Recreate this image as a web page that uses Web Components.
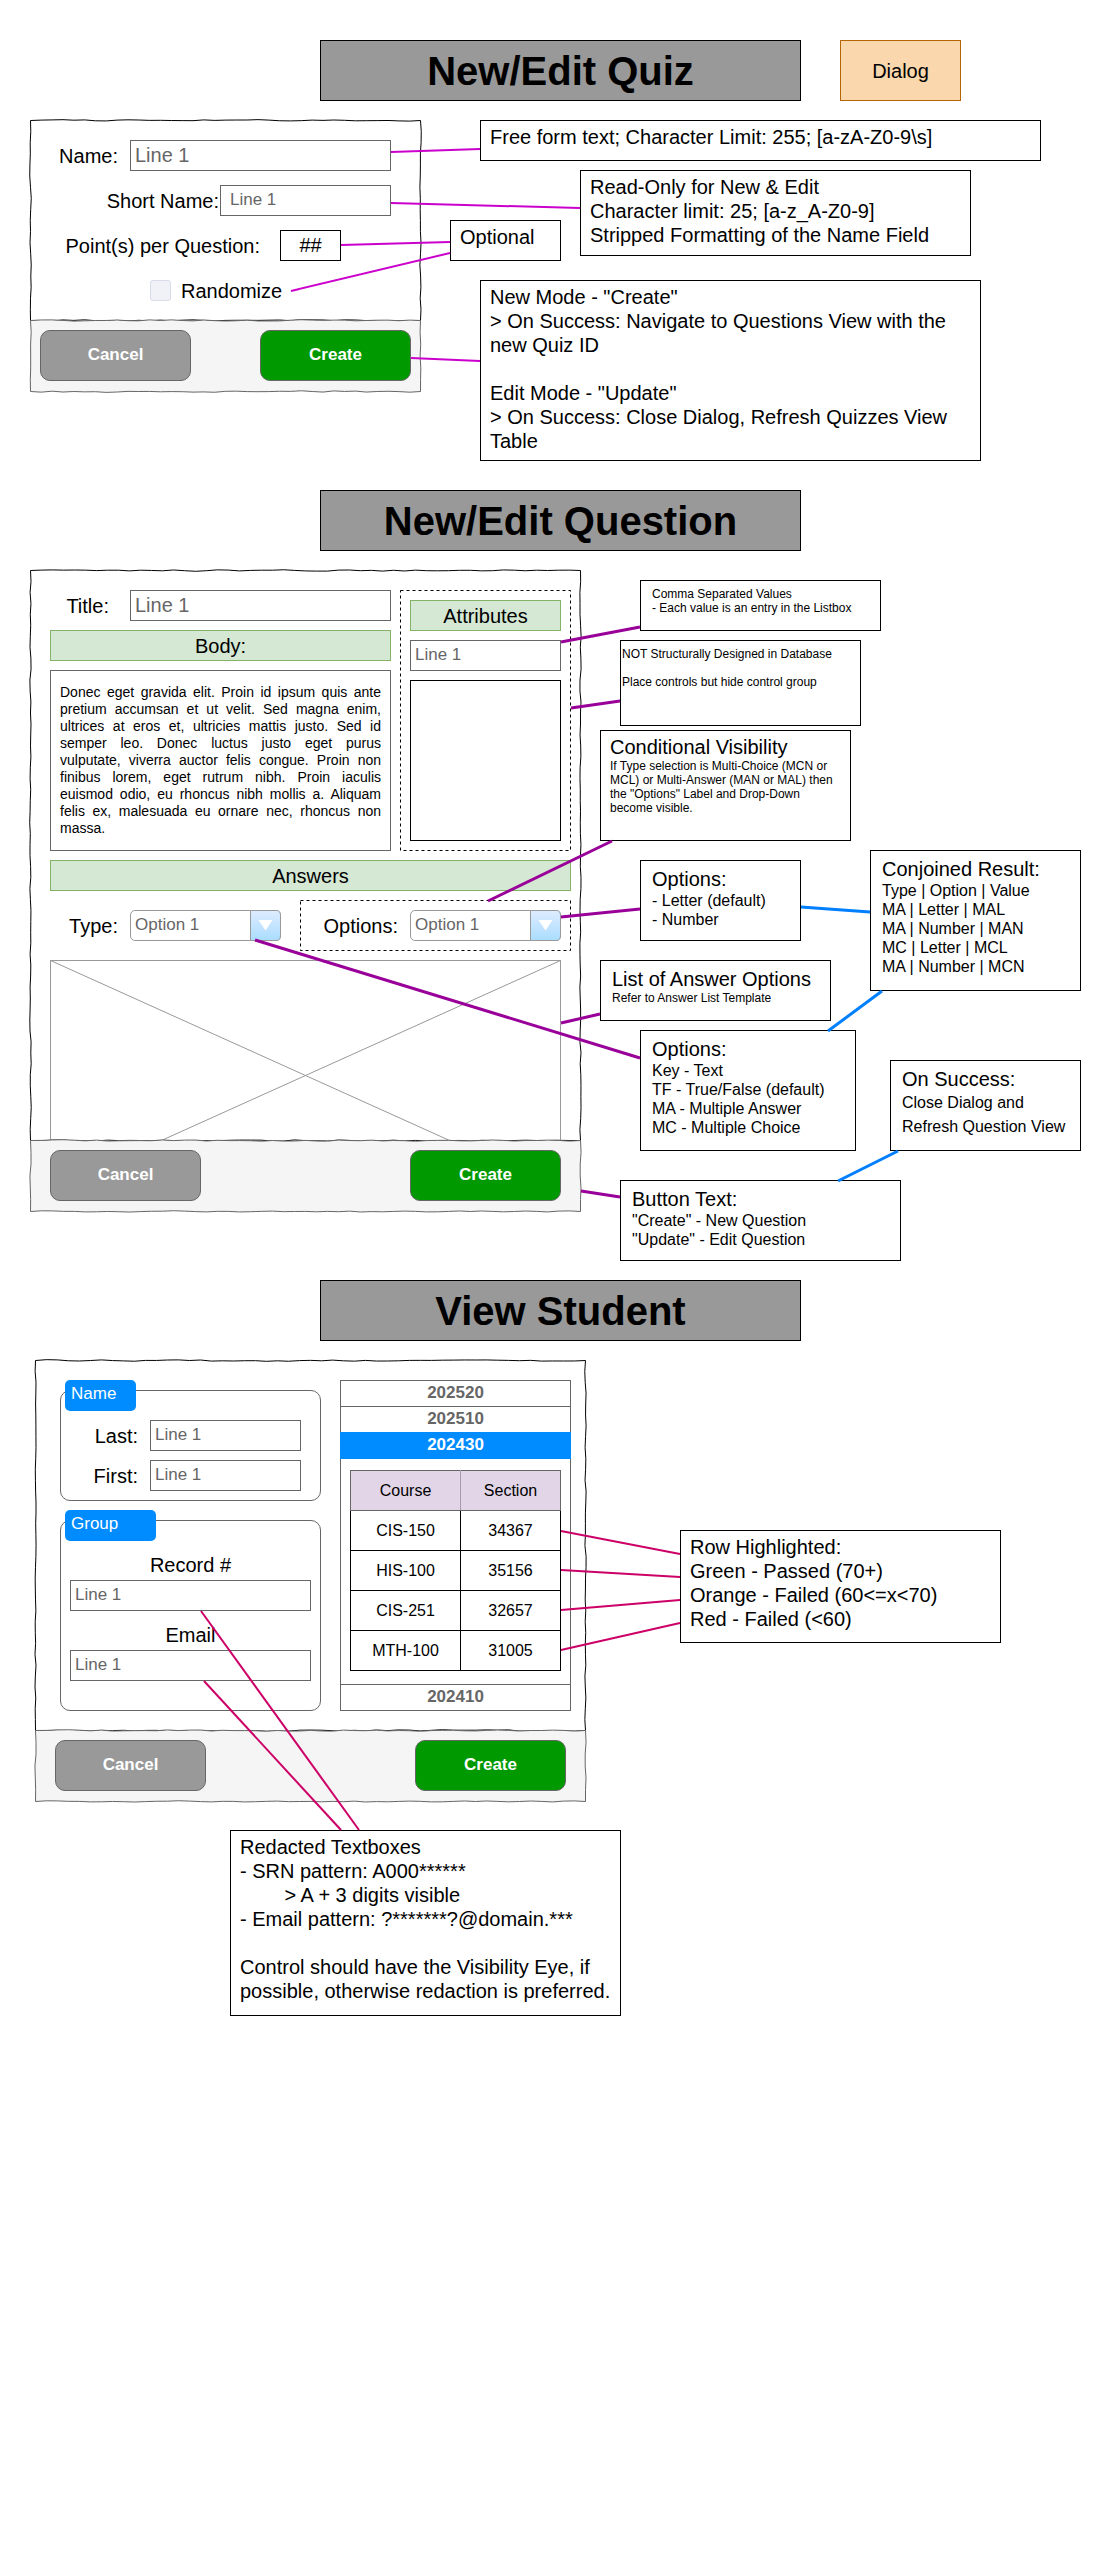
<!DOCTYPE html>
<html lang="en">
<head>
<meta charset="utf-8">
<title>Quiz dialogs wireframe</title>
<style>
  body { margin: 0; background: #fff; color: #000; font: 20px/24px "Liberation Sans", Arial, sans-serif; }
</style>
</head>
<body>
<wf-board>
  <wf-section style="--after: 99px">
    <wf-banner slot="head">New/Edit Quiz</wf-banner>
    <wf-badge slot="head">Dialog</wf-badge>
    <wf-quiz-dialog></wf-quiz-dialog>
  </wf-section>
  <wf-section style="--after: 69px">
    <wf-banner slot="head">New/Edit Question</wf-banner>
    <wf-question-dialog></wf-question-dialog>
  </wf-section>
  <wf-section style="--indent: 35px">
    <wf-banner slot="head">View Student</wf-banner>
    <wf-student-dialog></wf-student-dialog>
  </wf-section>

  <wf-note slot="notes" x="480" y="120" w="561" h="41"><p>Free form text; Character Limit: 255; [a-zA-Z0-9\s]</p></wf-note>
  <wf-note slot="notes" x="580" y="170" w="391" h="86"><p>Read-Only for New &amp; Edit</p><p>Character limit: 25; [a-z_A-Z0-9]</p><p>Stripped Formatting of the Name Field</p></wf-note>
  <wf-note slot="notes" x="450" y="220" w="111" h="41"><p>Optional</p></wf-note>
  <wf-note slot="notes" x="480" y="280" w="501" h="181"><p>New Mode - "Create"</p><p>&gt; On Success: Navigate to Questions View with the new Quiz ID</p><p><br></p><p>Edit Mode - "Update"</p><p>&gt; On Success: Close Dialog, Refresh Quizzes View Table</p></wf-note>

  <wf-note slot="notes" kind="inset" x="640" y="580" w="241" h="51"><p class="small">Comma Separated Values</p><p class="small">- Each value is an entry in the Listbox</p></wf-note>
  <wf-note slot="notes" kind="tight" x="620" y="640" w="241" h="86"><p class="small">NOT Structurally Designed in Database</p><p class="small"><br></p><p class="small">Place controls but hide control group</p></wf-note>
  <wf-note slot="notes" kind="narrow" x="600" y="730" w="251" h="111"><p>Conditional Visibility</p><p class="small">If Type selection is Multi-Choice (MCN or MCL) or Multi-Answer (MAN or MAL) then the "Options" Label and Drop-Down become visible.</p></wf-note>
  <wf-note slot="notes" kind="list" x="870" y="850" w="211" h="141"><p>Conjoined Result:</p><p class="mid">Type | Option | Value</p><p class="mid">MA | Letter | MAL</p><p class="mid">MA | Number | MAN</p><p class="mid">MC | Letter | MCL</p><p class="mid">MA | Number | MCN</p></wf-note>
  <wf-note slot="notes" kind="list" x="640" y="860" w="161" h="81"><p>Options:</p><p class="mid">- Letter (default)</p><p class="mid">- Number</p></wf-note>
  <wf-note slot="notes" kind="list" x="600" y="960" w="231" h="61"><p>List of Answer Options</p><p class="small">Refer to Answer List Template</p></wf-note>
  <wf-note slot="notes" kind="list" x="640" y="1030" w="216" h="121"><p>Options:</p><p class="mid">Key - Text</p><p class="mid">TF - True/False (default)</p><p class="mid">MA - Multiple Answer</p><p class="mid">MC - Multiple Choice</p></wf-note>
  <wf-note slot="notes" kind="list" x="890" y="1060" w="191" h="91"><p>On Success:</p><p class="mid loose">Close Dialog and</p><p class="mid loose">Refresh Question View</p></wf-note>
  <wf-note slot="notes" kind="list" x="620" y="1180" w="281" h="81"><p>Button Text:</p><p class="mid">"Create" - New Question</p><p class="mid">"Update" - Edit Question</p></wf-note>

  <wf-note slot="notes" x="680" y="1530" w="321" h="113"><p>Row Highlighted:</p><p>Green - Passed (70+)</p><p>Orange - Failed (60&lt;=x&lt;70)</p><p>Red - Failed (&lt;60)</p></wf-note>
  <wf-note slot="notes" x="230" y="1830" w="391" h="186"><p>Redacted Textboxes</p><p>- SRN pattern: A000******</p><p class="pre">        &gt; A + 3 digits visible</p><p>- Email pattern: ?*******?@domain.***</p><p><br></p><p>Control should have the Visibility Eye, if possible, otherwise redaction is preferred.</p></wf-note>
</wf-board>

<script>
const define = (name, html, setup) => {
  const template = document.createElement('template');
  template.innerHTML = html;
  customElements.define(name, class extends HTMLElement {
    connectedCallback() {
      if (this.shadowRoot) return;
      this.attachShadow({ mode: 'open' }).append(template.content.cloneNode(true));
      if (setup) setup(this, this.shadowRoot);
    }
  });
};

/* Connector lines: x1, y1, x2, y2 for each colour and weight. */
const connectors = [
  ['#cc00cc', 2, [[391,152,480,149],[391,203,580,208],[341,245,450,242],[291,291,450,253],[411,358,480,361]]],
  ['#990099', 3, [[561,642,640,627],[571,708,620,701],[488,901,612,841],[561,917,640,909],[561,1023,600,1014],[255,940,640,1058],[581,1191,620,1197]]],
  ['#007fff', 3, [[801,907,870,912],[882,991,828,1031],[898,1151,838,1181]]],
  ['#cc0066', 2, [[561,1531,680,1554],[561,1570,680,1577],[561,1610,680,1600],[561,1650,680,1623],[201,1611,359,1830],[204,1681,341,1830]]]
];

define('wf-board', `
  <style>
    :host { display: block; position: relative; min-height: 100vh; box-sizing: border-box; padding-top: 40px; }
    svg { position: absolute; left: 0; top: 0; width: 1px; height: 1px; overflow: visible; pointer-events: none; }
  </style>
  <slot></slot><slot name="notes"></slot><svg aria-hidden="true"></svg>`,
  (host, root) => {
    root.querySelector('svg').innerHTML = connectors.map(([color, width, lines]) =>
      `<g stroke="${color}" stroke-width="${width}">` +
      lines.map(([a, b, c, d]) => `<line x1="${a}" y1="${b}" x2="${c}" y2="${d}"/>`).join('') + '</g>').join('');
  });

define('wf-section', `
  <style>
    :host { display: flex; flex-direction: column; gap: 19px; padding-bottom: var(--after, 0px); }
    header { display: flex; gap: 39px; padding-left: 320px; }
    .body { display: flex; padding-left: var(--indent, 30px); }
  </style>
  <header><slot name="head"></slot></header>
  <div class="body"><slot></slot></div>`);

define('wf-banner', `
  <style>
    :host { display: block; width: 481px; box-sizing: border-box; padding-top: 2px; background: #999; border: 1px solid #000; }
    h2 { margin: 0; font-size: 40px; line-height: 57px; text-align: center; }
  </style>
  <h2><slot></slot></h2>`);

define('wf-badge', `
  <style>
    :host { display: flex; align-items: center; justify-content: center; width: 121px; box-sizing: border-box;
      background: #fad7ac; border: 1px solid #b46504; }
  </style>
  <slot></slot>`);

define('wf-note', `
  <style>
    :host { display: block; position: absolute; box-sizing: border-box; background: #fff; border: 1px solid #000; padding: 4px 4px 4px 9px; }
    :host([kind="narrow"]) { padding-right: 14px; }
    :host([kind="inset"]) { padding: 6px 8px 4px 11px; }
    :host([kind="tight"]) { padding: 6px 2px 4px 1px; }
    :host([kind="list"]) { padding: 6px 4px 4px 11px; }
    ::slotted(p) { margin: 0; }
    ::slotted(.mid) { font-size: 16px; line-height: 19px; }
    ::slotted(.small) { font-size: 12px; line-height: 14px; }
    ::slotted(.loose) { line-height: 24px; }
    ::slotted(.pre) { white-space: pre; }
  </style>
  <slot></slot>`,
  host => {
    const at = name => host.getAttribute(name) + 'px';
    Object.assign(host.style, { left: at('x'), top: at('y'), width: at('w'), minHeight: at('h') });
  });

/* Panel with a hand-drawn outline. */
const roughEdge = (w, h, seed) => {
  let s = seed;
  const rnd = () => (s = (s * 16807) % 2147483647) / 2147483647 * 2 - 1;
  const walk = (x1, y1, x2, y2) => {
    const len = Math.hypot(x2 - x1, y2 - y1), n = Math.round(len / 22);
    const ux = (x2 - x1) / len, uy = (y2 - y1) / len;
    let d = '';
    for (let i = 1; i <= n; i++) {
      const t = i / n, m = t - .5 / n, j = i === n ? 0 : rnd() * .6, k = rnd() * 1.4;
      d += `Q${(x1 + ux * len * m - uy * k).toFixed(1)} ${(y1 + uy * len * m + ux * k).toFixed(1)} ` +
           `${(x1 + ux * len * t - uy * j).toFixed(1)} ${(y1 + uy * len * t + ux * j).toFixed(1)}`;
    }
    return d;
  };
  return `M.5 .5${walk(.5, .5, w - .5, .5)}${walk(w - .5, .5, w - .5, h + .5)}${walk(w - .5, h + .5, .5, h + .5)}${walk(.5, h + .5, .5, .5)}Z`;
};

define('wf-panel', `
  <style>
    :host { display: block; position: relative; }
    svg { position: absolute; inset: 0; width: 100%; height: 100%; overflow: visible; }
    path { vector-effect: non-scaling-stroke; }
    div { position: relative; height: 100%; box-sizing: border-box; }
  </style>
  <svg preserveAspectRatio="none" aria-hidden="true"></svg><div><slot></slot></div>`,
  (host, root) => {
    const w = +host.getAttribute('w'), h = +host.getAttribute('h'), footer = host.hasAttribute('footer');
    const svg = root.querySelector('svg');
    svg.setAttribute('viewBox', `0 0 ${w} ${h}`);
    svg.innerHTML = `<path d="${roughEdge(w, h, w * 7 + h)}" fill="${footer ? '#f5f5f5' : '#fff'}" stroke="${footer ? '#666' : '#000'}"/>`;
  });

define('wf-dialog-footer', `
  <style>
    :host { display: block; }
    footer { display: flex; justify-content: space-between; padding: 10px var(--side, 20px); }
    button { width: 151px; height: 51px; box-sizing: border-box; padding: 0 0 2px; border: 1px solid #666; border-radius: 10px;
      background: #999; color: #fff; font: bold 17px/20px "Liberation Sans", Arial, sans-serif; }
    .create { background: #009900; }
  </style>
  <footer><button type="button">Cancel</button><button type="button" class="create">Create</button></footer>`);

define('wf-field', `
  <style>
    :host { display: flex; align-items: center; justify-content: flex-end; gap: var(--gap, 12px); }
    :host([stacked]) { flex-direction: column; align-items: stretch; gap: 0; }
    label { white-space: nowrap; }
    label:empty { display: none; }
    :host([stacked]) label { text-align: center; line-height: 30px; }
    input { width: var(--input, 151px); height: 31px; box-sizing: border-box; margin: 0; padding: 0 4px 2px; border: 1px solid #666;
      border-radius: 0; background: #fff; color: #666; font: 17px/20px "Liberation Sans", Arial, sans-serif; }
    :host([large]) input { font-size: 20px; line-height: 24px; padding-bottom: 0; }
    :host([indent]) input { padding: 0 9px 1px; }
    :host([count]) input { border-color: #000; color: #000; font-size: 20px; padding: 0; text-align: center; }
    :host([stacked]) input, :host(:not([label])) input { width: 100%; }
  </style>
  <label for="box"></label><input id="box" type="text">`,
  (host, root) => {
    root.querySelector('label').textContent = host.getAttribute('label') || '';
    const input = root.querySelector('input');
    input.setAttribute('value', host.getAttribute('value') || 'Line 1');
    if (!host.hasAttribute('label')) input.setAttribute('aria-label', 'Attribute values');
  });

define('wf-check', `
  <style>
    :host { display: flex; align-items: center; gap: 10px; }
    input { appearance: none; width: 21px; height: 21px; margin: 0; box-sizing: border-box; border: 1px solid #d8dce8; border-radius: 3px; background: #f0f2f7; }
  </style>
  <input id="tick" type="checkbox"><label for="tick"><slot></slot></label>`);

define('wf-select', `
  <style>
    :host { display: flex; align-items: center; justify-content: flex-end; gap: 12px; }
    .box { display: grid; width: 151px; height: 31px; }
    .box > * { grid-area: 1 / 1; }
    select { appearance: none; width: 100%; height: 31px; box-sizing: border-box; margin: 0; padding: 0 34px 2px 4px; border: 1px solid #999;
      border-radius: 5px; background: #fff; color: #666; font: 17px/20px "Liberation Sans", Arial, sans-serif; }
    svg { justify-self: end; pointer-events: none; }
  </style>
  <label for="pick"></label>
  <span class="box">
    <select id="pick"><option>Option 1</option></select>
    <svg width="31" height="31" viewBox="0 0 31 31" aria-hidden="true">
      <defs><linearGradient id="g" x1="0" y1="0" x2="0" y2="1"><stop offset="0" stop-color="#deecff"/><stop offset="1" stop-color="#aaddff"/></linearGradient></defs>
      <path d="M.5 .5H26.500Q30.500 .5 30.500 5.500V25.500Q30.500 30.500 26.500 30.500H.5Z" fill="url(#g)" stroke="#999"/>
      <path d="M8.500 10H22.500L15.500 20.500Z" fill="#fff"/>
    </svg>
  </span>`,
  (host, root) => { root.querySelector('label').textContent = host.getAttribute('label'); });

define('wf-band', `
  <style>
    :host { display: block; box-sizing: border-box; background: #d5e8d4; border: 1px solid #82b366; padding-top: 1px; line-height: 28px; text-align: center; }
  </style>
  <slot></slot>`);

/* Dashed control group. */
define('wf-dashed', `
  <style>
    :host { display: block; position: relative; box-sizing: border-box; padding: 10px; }
    svg { position: absolute; inset: 0; width: 100%; height: 100%; }
    .in { display: flex; flex-direction: column; gap: 9px; position: relative; }
  </style>
  <svg aria-hidden="true"><rect x=".5" y=".5" fill="none" stroke="#000" stroke-dasharray="3 3" style="width: calc(100% - 1px); height: calc(100% - 1px)"/></svg>
  <div class="in"><slot></slot></div>`);

define('wf-quiz-dialog', `
  <style>
    :host { display: block; width: 391px; }
    form { display: flex; flex-direction: column; gap: 14px; padding: 20px 30px 14px; }
    .points { --gap: 20px; --input: 61px; padding-right: 50px; }
    .tick { height: 31px; padding-left: 90px; }
  </style>
  <wf-panel w="391" h="200"><form>
    <wf-field large label="Name:" value="Line 1" style="--input: 261px"></wf-field>
    <wf-field indent label="Short Name:" value="Line 1" style="--gap: 1px; --input: 171px"></wf-field>
    <wf-field count class="points" label="Point(s) per Question:" value="##"></wf-field>
    <wf-check class="tick">Randomize</wf-check>
  </form></wf-panel>
  <wf-panel footer w="391" h="70"><wf-dialog-footer style="--side: 10px"></wf-dialog-footer></wf-panel>`);

define('wf-question-dialog', `
  <style>
    :host { display: block; width: 551px; }
    form { display: flex; flex-direction: column; gap: 9px; padding: 20px 10px 0 20px; }
    .top, .opts { display: flex; gap: 9px; }
    .left { display: flex; flex-direction: column; gap: 9px; width: 341px; }
    textarea { display: block; height: 181px; box-sizing: border-box; margin: 0; padding: 13px 9px 8px; border: 1px solid #666; border-radius: 0;
      resize: none; overflow: hidden; background: #fff; color: #000; font: 14px/17px "Liberation Sans", Arial, sans-serif; text-align: justify; }
    .attrs { flex: 1; }
    .attrs select { height: 161px; box-sizing: border-box; margin: 0; padding: 0; border: 1px solid #000; border-radius: 0; background: #fff; }
    .opts { justify-content: space-between; }
    .type { width: 231px; height: 51px; }
    .group { width: 271px; }
    .image { display: block; width: 511px; height: 180px; overflow: hidden; }
  </style>
  <wf-panel w="551" h="570"><form>
    <div class="top">
      <div class="left">
        <wf-field large label="Title:" value="Line 1" style="--gap: 21px; --input: 261px"></wf-field>
        <wf-band>Body:</wf-band>
        <textarea aria-label="Body">Donec eget gravida elit. Proin id ipsum quis ante pretium accumsan et ut velit. Sed magna enim, ultrices at eros et, ultricies mattis justo. Sed id semper leo. Donec luctus justo eget purus vulputate, viverra auctor felis congue. Proin non finibus lorem, eget rutrum nibh. Proin iaculis euismod odio, eu rhoncus nibh mollis a. Aliquam felis ex, malesuada eu ornare nec, rhoncus non massa.</textarea>
      </div>
      <wf-dashed class="attrs">
        <wf-band>Attributes</wf-band>
        <wf-field value="Line 1"></wf-field>
        <select multiple aria-label="Attributes"></select>
      </wf-dashed>
    </div>
    <wf-band>Answers</wf-band>
    <div class="opts">
      <wf-select class="type" label="Type:"></wf-select>
      <wf-dashed class="group"><wf-select label="Options:"></wf-select></wf-dashed>
    </div>
    <svg class="image" viewBox="0 0 511 180" aria-hidden="true"><g fill="none" stroke="#999"><rect x=".5" y=".5" width="510" height="230"/><path d="M.5 .5L510.500 230.500M510.500 .5L.5 230.500"/></g></svg>
  </form></wf-panel>
  <wf-panel footer w="551" h="70"><wf-dialog-footer></wf-dialog-footer></wf-panel>`);

define('wf-group', `
  <style>
    :host { display: block; }
    fieldset { position: relative; min-width: 0; margin: 0; border: 1px solid #666; border-radius: 10px; padding: var(--pad);
      display: flex; flex-direction: column; gap: 9px; }
    legend { position: absolute; left: 4px; top: -11px; width: var(--tag, 71px); height: 31px; box-sizing: border-box; padding: 4px 6px;
      border-radius: 5px; background: #008cff; color: #fff; font-size: 17px; line-height: 20px; }
  </style>
  <fieldset><legend></legend><slot></slot></fieldset>`,
  (host, root) => { root.querySelector('legend').textContent = host.getAttribute('label'); });

define('wf-accordion', `
  <style>
    :host { display: block; }
    .frame { display: flex; flex-direction: column; border: 1px solid #666; }
    button { height: 25px; box-sizing: content-box; margin: 0; padding: 0; border: 0; background: #fff; color: #666;
      font: bold 17px/24px "Liberation Sans", Arial, sans-serif; }
    button span { display: block; height: 25px; }
    .line { border-bottom: 1px solid #666; }
    .on { height: 27px; margin: 0 -1px; background: #008cff; color: #fff; }
    .last { border-top: 1px solid #666; }
    .content { padding: 11px 9px 13px; }
  </style>
  <div class="frame">
    <button type="button" class="line"><span>202520</span></button>
    <button type="button"><span>202510</span></button>
    <button type="button" class="on" aria-expanded="true"><span>202430</span></button>
    <div class="content"><slot></slot></div>
    <button type="button" class="last"><span>202410</span></button>
  </div>`);

define('wf-courses', `
  <style>
    :host { display: block; }
    table { width: 100%; border-collapse: collapse; table-layout: fixed; font-size: 16px; line-height: 20px; text-align: center; }
    th, td { height: 39px; padding: 0; border: 1px solid #000; font-weight: normal; }
    th { background: #e1d5e7; border-color: #666; }
    th:first-child { width: 109px; border-right-color: #a79bad; }
  </style>
  <table>
    <thead><tr><th scope="col">Course</th><th scope="col">Section</th></tr></thead>
    <tbody>
      <tr><td>CIS-150</td><td>34367</td></tr>
      <tr><td>HIS-100</td><td>35156</td></tr>
      <tr><td>CIS-251</td><td>32657</td></tr>
      <tr><td>MTH-100</td><td>31005</td></tr>
    </tbody>
  </table>`);

define('wf-student-dialog', `
  <style>
    :host { display: block; width: 551px; }
    form { display: flex; gap: 19px; padding: 20px 15px 19px 25px; }
    .left { display: flex; flex-direction: column; gap: 19px; width: 261px; padding-top: 10px; }
    .right { flex: 1; }
  </style>
  <wf-panel w="551" h="370"><form>
    <div class="left">
      <wf-group label="Name" style="--pad: 29px 19px 9px">
        <wf-field label="Last:"></wf-field>
        <wf-field label="First:"></wf-field>
      </wf-group>
      <wf-group label="Group" style="--pad: 29px 9px; --tag: 91px">
        <wf-field stacked label="Record #"></wf-field>
        <wf-field stacked label="Email"></wf-field>
      </wf-group>
    </div>
    <wf-accordion class="right"><wf-courses></wf-courses></wf-accordion>
  </form></wf-panel>
  <wf-panel footer w="551" h="70"><wf-dialog-footer></wf-dialog-footer></wf-panel>`);
</script>
</body>
</html>
